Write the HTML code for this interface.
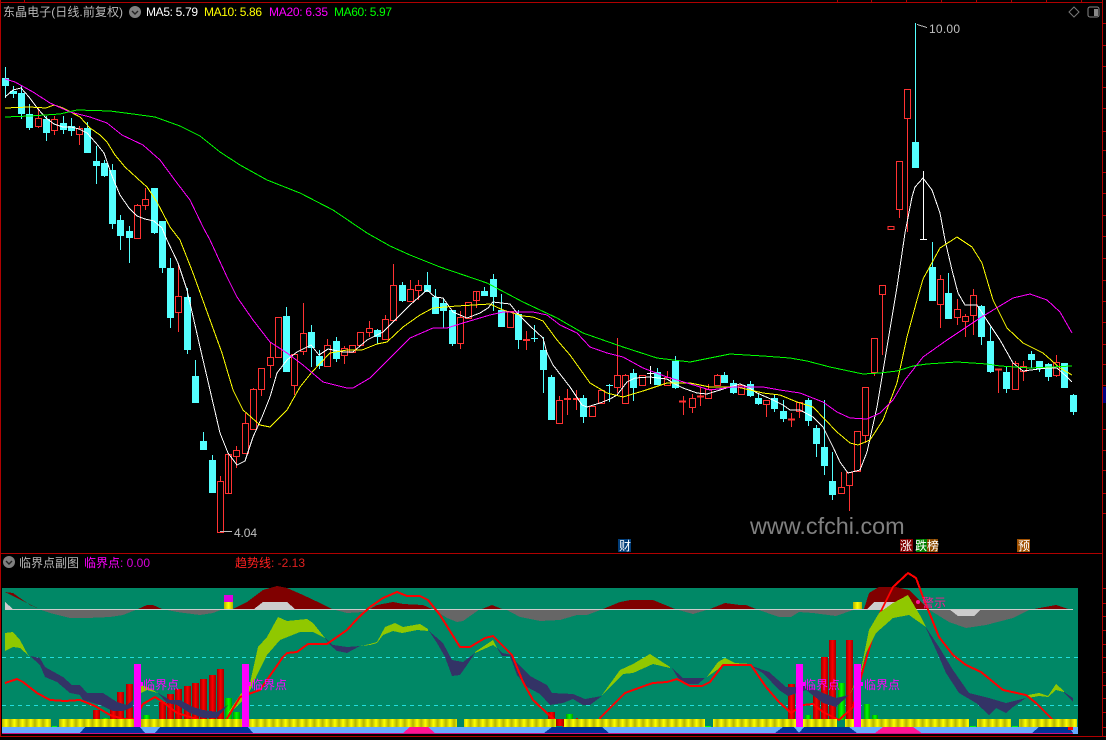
<!DOCTYPE html>
<html><head><meta charset="utf-8"><title>东晶电子</title>
<style>html,body{margin:0;padding:0;background:#000;width:1106px;height:740px;overflow:hidden}svg{display:block}text{font-family:"Liberation Sans","WenQuanYi Zen Hei","Noto Sans CJK SC",sans-serif;font-size:12px}</style></head>
<body>
<svg width="1106" height="740" viewBox="0 0 1106 740" xmlns="http://www.w3.org/2000/svg">
<defs>
<linearGradient id="yg"><stop offset="0" stop-color="#b4b400"/><stop offset=".5" stop-color="#ffff00"/><stop offset="1" stop-color="#b4b400"/></linearGradient>
<pattern id="yb" patternUnits="userSpaceOnUse" x="2" y="719" width="8.22" height="8"><rect width="8.22" height="8" fill="url(#yg)"/></pattern>
<linearGradient id="rg"><stop offset="0" stop-color="#a00000"/><stop offset=".5" stop-color="#ff0000"/><stop offset="1" stop-color="#a00000"/></linearGradient>
<linearGradient id="gg"><stop offset="0" stop-color="#00a000"/><stop offset=".5" stop-color="#00ff00"/><stop offset="1" stop-color="#00a000"/></linearGradient>
</defs>
<g shape-rendering="crispEdges">
<!-- frame -->
<path d="M0 2.5H1103M1102.5 0V737M0 553.5H1103M0 736.5H1106M0.5 0V737M24.5 0V2M837.5 0V2M871.5 0V2M906.5 0V2M941.5 0V2M976.5 0V2M1011.5 0V2M1046.5 0V2M1081.5 0V2" stroke="#b00000" fill="none"/>
<path stroke="#b00000" fill="none" d="M1103 23.5h3M1103 45.5h3M1103 66.5h3M1103 87.5h3M1103 108.5h3M1103 131.5h3M1103 150.5h3M1103 172.5h3M1103 193.5h3M1103 215.5h3M1103 236.5h3M1103 258.5h3M1103 280.5h3M1103 301.5h3M1103 322.5h3M1103 344.5h3M1103 364.5h3M1103 385.5h3M1103 429.5h3M1103 450.5h3M1103 470.5h3M1103 493.5h3M1103 513.5h3M1103 588.5h3M1103 603.5h3M1103 616.5h3M1103 630.5h3M1103 644.5h3M1103 657.5h3M1103 672.5h3M1103 685.5h3M1103 698.5h3M1103 712.5h3M1103 727.5h3"/>
<rect x="1103" y="387" width="3" height="16" fill="#000080"/>

<!-- cyan wicks -->
<path stroke="#54ffff" fill="none" d="M5.5 67V98M13.5 86V98M21.5 86V119M29.5 104V130M46.5 116V141M63.5 116V134M71.5 118V136M87.5 122V153M96.5 146V184M104.5 160V177M112.5 164V229M120.5 215V250M129.5 226V263M154.5 188V234M162.5 221V273M170.5 258V328M187.5 288V354M195.5 360V403M203.5 432V450M212.5 455V493M286.5 307V372M311.5 325V367M319.5 350V369M336.5 337V362M377.5 329V344M402.5 282V302M427.5 272V292M435.5 289V314M443.5 299V328M452.5 310V346M484.5 287V296M493.5 274V311M501.5 294V327M518.5 310V349M534.5 325V342M543.5 337V393M551.5 375V420M583.5 395V423M609.5 384V402M633.5 369V401M657.5 368V385M675.5 356V389M724.5 372V383M733.5 380V394M750.5 381V397M758.5 394V405M774.5 395V412M783.5 400V422M808.5 398V426M816.5 425V457M824.5 400V475M832.5 452V500M915.5 23V142M932.5 242V301M948.5 273V319M981.5 305V345M990.5 327V373M1006.5 367V393M1031.5 351V368M1039.5 361V372M1048.5 363V381M1064.5 363V388M1073.5 394V415"/>
<path stroke="#54ffff" fill="none" d="M531 338.5h7M606 385.5h7"/>
<!-- cyan bodies -->
<path fill="#54ffff" d="M2 78h7V86h-7zM10 91h7V94h-7zM18 93h7V114h-7zM26 114h7V128h-7zM43 119h7V133h-7zM60 123h7V130h-7zM68 126h7V131h-7zM84 128h7V153h-7zM93 161h7V166h-7zM101 163h7V176h-7zM109 170h7V224h-7zM117 220h7V236h-7zM126 231h7V238h-7zM151 188h7V233h-7zM159 221h7V268h-7zM167 268h7V318h-7zM184 297h7V350h-7zM192 376h7V403h-7zM200 441h7V450h-7zM209 460h7V493h-7zM283 316h7V372h-7zM308 332h7V348h-7zM316 356h7V366h-7zM333 341h7V359h-7zM374 330h7V337h-7zM399 285h7V301h-7zM424 285h7V292h-7zM432 297h7V314h-7zM440 303h7V311h-7zM449 310h7V344h-7zM481 291h7V296h-7zM490 279h7V297h-7zM498 310h7V327h-7zM515 314h7V340h-7zM540 350h7V370h-7zM548 377h7V420h-7zM580 398h7V417h-7zM630 373h7V388h-7zM654 372h7V385h-7zM672 361h7V388h-7zM721 375h7V383h-7zM730 383h7V393h-7zM747 384h7V396h-7zM755 398h7V404h-7zM771 398h7V409h-7zM780 411h7V419h-7zM805 400h7V421h-7zM813 428h7V444h-7zM821 447h7V466h-7zM829 481h7V495h-7zM912 142h7V168h-7zM929 267h7V301h-7zM945 293h7V319h-7zM978 306h7V337h-7zM987 341h7V372h-7zM1003 372h7V389h-7zM1028 354h7V360h-7zM1036 361h7V369h-7zM1045 364h7V377h-7zM1061 363h7V388h-7zM1070 395h7V412h-7z"/>
<!-- red wicks -->
<path stroke="#ff3232" fill="none" d="M38.5 108V118M38.5 126V128M54.5 116V119M54.5 130V135M79.5 126V128M79.5 134V145M137.5 204V205M145.5 188V199M145.5 205V210M178.5 265V296M178.5 312V332M220.5 476V481M228.5 454V493M236.5 446V450M236.5 456V468M245.5 413V423M253.5 388V389M261.5 389V396M270.5 342V357M270.5 365V378M294.5 385V395M303.5 303V333M303.5 351V355M327.5 339V345M344.5 346V348M344.5 355V364M369.5 321V328M369.5 332V337M385.5 315V319M393.5 264V285M410.5 280V289M418.5 280V285M418.5 290V300M460.5 311V317M460.5 343V349M476.5 292V300M476.5 300V308M526.5 331V350M559.5 396V400M559.5 423V424M567.5 389V415M576.5 390V410M592.5 416V417M617.5 338V375M617.5 387V393M625.5 374V375M625.5 403V404M667.5 371V377M683.5 396V415M692.5 394V398M692.5 407V413M700.5 387V406M708.5 384V389M717.5 374V375M766.5 404V417M791.5 413V427M799.5 402V418M841.5 472V487M849.5 485V511M857.5 431V432M865.5 435V443M874.5 372V376M882.5 294V355M899.5 209V218M907.5 118V232M940.5 275V279M940.5 304V328M957.5 299V309M957.5 317V325M965.5 314V316M965.5 321V337M973.5 289V295M973.5 315V335M998.5 369V393M1015.5 361V363M1023.5 361V366M1023.5 371V381M1056.5 355V362M1056.5 375V377"/>
<!-- red flat -->
<path stroke="#ff3232" stroke-width="2" fill="none" d="M523 340h7M564 399h7M573 399h7M679 401.500h7M697 396.500h7M788 419.500h7M995 369.500h7"/>
<!-- red hollow bodies -->
<path stroke="#ff3232" fill="none" d="M35.500 118.500h6v8h-6zM51.500 119.500h6v11h-6zM76.500 128.500h6v6h-6zM134.500 205.500h6v33h-6zM142.500 199.500h6v6h-6zM175.500 296.500h6v16h-6zM217.500 481.500h6v51h-6zM225.500 454.500h6v39h-6zM233.500 450.500h6v6h-6zM242.500 423.500h6v30h-6zM250.500 389.500h6v40h-6zM258.500 368.500h6v21h-6zM267.500 357.500h6v8h-6zM275.500 317.500h6v40h-6zM291.500 354.500h6v31h-6zM300.500 333.500h6v18h-6zM324.500 345.500h6v21h-6zM341.500 348.500h6v7h-6zM349.500 345.500h6v7h-6zM357.500 332.500h6v13h-6zM366.500 328.500h6v4h-6zM382.500 319.500h6v20h-6zM390.500 285.500h6v35h-6zM407.500 289.500h6v12h-6zM415.500 285.500h6v5h-6zM457.500 317.500h6v26h-6zM465.500 302.500h6v16h-6zM473.500 291.500h6v9h-6zM507.500 311.500h6v16h-6zM556.500 400.500h6v23h-6zM589.500 406.500h6v10h-6zM598.500 390.500h6v13h-6zM614.500 375.500h6v12h-6zM622.500 375.500h6v28h-6zM639.500 375.500h6v10h-6zM664.500 377.500h6v8h-6zM689.500 398.500h6v9h-6zM705.500 389.500h6v9h-6zM714.500 375.500h6v10h-6zM738.500 385.500h6v9h-6zM763.500 400.500h6v4h-6zM796.500 402.500h6v9h-6zM838.500 487.500h6v6h-6zM846.500 472.500h6v13h-6zM854.500 431.500h6v40h-6zM862.500 387.500h6v48h-6zM871.500 338.500h6v34h-6zM879.500 285.500h6v9h-6zM888 226.500h6v3h-6zM896.500 161.500h6v48h-6zM904.500 89.500h6v29h-6zM937.500 279.500h6v25h-6zM954.500 309.500h6v8h-6zM962.500 316.500h6v5h-6zM970.500 295.500h6v20h-6zM1012.500 363.500h6v26h-6zM1020.500 366.500h6v5h-6zM1053.500 362.500h6v13h-6z"/>
<!-- white doji / cross -->
<path stroke="#fff" fill="none" d="M650.500 366V384M647 373.500h7M923.500 171V239M920 239.500h7"/>

<!-- MA lines -->
<polyline fill="none" stroke="#fff" points="5,97 13,90 21,88 29,97 38,109 46,118 54,124 63,127 71,127 79,129 87,133 96,143 104,153 112,176 120,195 129,208 137,216 145,219 154,221 162,228 167,240 178,263 187,290 200,347 210,390 220,433 228,453 237,465 245,461 253,437 262,417 270,397 277,373 287,360 297,352 311,345 319,355 328,349 343,352 353,352 367,340 383,332 390,325 400,315 410,305 427,290 435,297 443,298 453,312 467,318 480,313 488,308 493,302 510,304 517,313 530,326 543,338 547,353 553,365 570,387 582,405 587,407 600,403 610,399 617,395 627,382 635,378 650,377 667,379 673,383 683,388 697,393 707,394 720,390 740,384 748,387 757,393 773,400 783,405 790,410 800,410 813,417 823,427 833,447 840,462 848,473 860,470 867,452 877,407 887,347 897,287 905,233 912,197 915,187 923,178 932,190 940,213 945,240 952,270 958,293 965,305 977,305 988,322 1000,340 1013,363 1023,371 1047,368 1057,368 1067,377 1072,382"/>
<polyline fill="none" stroke="#ff0" points="5,108 29,107 46,108 54,105 63,108 80,117 90,128 100,135 107,142 115,155 125,167 137,178 147,187 157,202 170,227 180,240 193,273 210,320 222,353 233,390 243,410 260,425 270,427 287,410 300,387 312,372 330,353 347,350 362,350 377,344 387,342 403,327 420,315 433,308 457,306 490,304 503,310 523,316 533,317 543,321 557,340 570,355 590,383 607,393 623,397 643,391 667,383 690,383 710,387 737,387 763,393 780,395 797,402 813,407 837,432 850,443 858,445 870,440 883,420 897,383 907,337 917,300 923,279 940,248 957,237 972,247 982,263 993,300 1007,328 1023,343 1043,353 1060,368 1072,375"/>
<polyline fill="none" stroke="#ff00ff" points="5,79 15,82 33,92 50,103 70,112 90,117 107,123 122,135 143,145 160,160 177,183 190,200 203,227 210,240 227,277 237,297 253,320 270,342 287,353 303,365 323,382 347,388 353,388 370,378 390,358 410,338 433,328 447,328 463,323 490,315 503,312 533,312 547,315 560,325 577,333 590,347 607,353 623,357 643,368 667,377 687,383 710,390 733,387 763,387 780,390 800,393 823,402 837,412 850,418 867,419 880,413 893,400 905,380 923,357 947,340 980,318 1013,298 1030,294 1047,300 1060,312 1072,333"/>
<polyline fill="none" stroke="#00ff00" points="5,117 30,116 60,114 77,110 110,111 133,114 155,117 180,126 200,136 220,152 240,165 267,180 300,193 333,210 367,233 390,246 410,255 440,267 487,283 523,302 557,318 583,333 623,347 657,358 690,362 730,354 763,356 790,358 807,361 830,367 863,374 880,373 897,371 913,366 927,364 957,362 987,364 1000,366 1030,368 1072,366"/>

<!-- sub-chart background -->
<rect x="2" y="588" width="1076" height="146" fill="#008866"/>
<!-- dark-red hills -->
<path fill="#800000" d="M5 592L13 593 20 598 30 605 39 609ZM138 609L147 605 153 605 162 609ZM233 609L247 602 263 590 277 586 287 588 303 595 320 603 332 609ZM370 609L377 605 393 602 403 604 423 605 432 609ZM482 609L492 605 502 609ZM603 609L620 602 630 600 653 600 675 609ZM710 609L725 603 740 605 746 605 756 609ZM864 609L869 593 879 587 896 587 909 590 921 602 928 609ZM1034 609L1056 605 1068 609Z"/>
<path fill="#666" d="M38 609L50 613 70 618 87 618 110 617 123 615 138 609ZM162 609L177 612 200 615 213 613 223 609ZM332 609L347 613 363 612 370 609ZM433 609L447 618 457 622 463 621 480 609ZM505 609L520 617 540 621 560 620 577 615 587 615 603 609ZM675 609L693 614 710 609ZM756 609L779 617 791 617 799 612 813 613 836 616 853 610ZM928 609L949 622 966 628 986 625 1013 618 1031 609Z"/>
<path fill="#ccc" d="M5 602L13 609H5ZM254 609L263 602 287 602 295 609ZM867 609L874 602 896 602 900 609ZM949 609L958 616 974 616 981 609Z"/>
<rect x="5" y="609" width="1068" height="1" fill="#ccc"/>
<!-- dashed -->
<path stroke="#22dddd" stroke-dasharray="4 4" fill="none" d="M2 657.500H1078M2 705.500H1078"/>
<!-- red bars -->
<g fill="url(#rg)">
<rect x="93" y="710" width="7" height="10"/><rect x="110" y="708" width="7" height="12"/><rect x="117" y="692" width="7" height="28"/><rect x="126" y="684" width="7" height="36"/><rect x="159" y="702" width="7" height="18"/><rect x="167" y="694" width="7" height="26"/><rect x="175" y="689" width="7" height="31"/><rect x="184" y="686" width="7" height="34"/><rect x="192" y="683" width="7" height="37"/><rect x="200" y="679" width="7" height="41"/><rect x="209" y="675" width="7" height="45"/><rect x="217" y="669" width="7" height="51"/><rect x="548" y="712" width="7" height="8"/><rect x="576" y="718" width="2" height="2"/><rect x="788" y="684" width="7" height="36"/><rect x="813" y="693" width="7" height="27"/><rect x="821" y="657" width="7" height="63"/><rect x="829" y="640" width="7" height="80"/><rect x="846" y="640" width="7" height="80"/>
</g>
<g fill="url(#gg)">
<rect x="102" y="718" width="7" height="2"/><rect x="143" y="715" width="7" height="5"/><rect x="225" y="698" width="7" height="22"/><rect x="233" y="712" width="7" height="8"/><rect x="566" y="714" width="7" height="6"/><rect x="805" y="715" width="6" height="5"/><rect x="838" y="683" width="7" height="37"/><rect x="864" y="704" width="6" height="16"/><rect x="872" y="715" width="6" height="5"/>
</g>
<!-- ribbons -->
<path fill="#90c800" d="M5 633L13 632 20 640 28 655 29 656 20 648 13 647 5 651ZM141 685L147 687 158 693 147 690 141 693ZM228 713L240 695 250 683 258 647 267 637 278 617 287 621 307 619 313 623 325 638 313 632 300 632 280 640 267 655 257 675 248 695 233 710ZM360 646L370 644 377 642 385 627 395 623 403 627 420 624 428 629 428 631 417 630 402 633 393 631 383 635 377 643 370 645ZM475 652L493 640 497 648 493 645 475 653ZM602 695L620 670 633 664 650 654 670 667 670 668 653 664 633 673 623 674ZM707 677L718 662 725 658 735 663 751 664 751 665 736 666 723 665 717 670Z"/>
<path fill="#90c800" d="M1028 695L1039 693 1048 696 1056 684 1064 691 1064 692 1056 690 1048 697 1039 696 1028 698Z"/>
<path fill="#333366" d="M30 656L40 658 45 667 63 677 72 685 80 685 87 693 103 693 117 702 127 705 133 700 133 707 123 711 113 711 100 705 83 700 80 695 70 693 57 682 45 677 40 665ZM158 693L170 700 180 700 193 707 203 710 217 712 228 705 217 718 203 718 190 713 177 705 167 703ZM325 638L333 645 347 647 360 646 347 653 337 651 330 645ZM429 631L443 643 452 660 463 662 475 653 467 665 460 675 452 676 445 657 437 643ZM497 648L502 653 512 655 517 663 530 676 547 685 552 693 573 694 585 699 602 696 590 705 583 705 573 699 563 703 550 705 540 694 527 687 517 675 510 656 502 656ZM672 668L683 678 705 678 698 684 687 684 678 678ZM752 666L769 672 786 687 796 687 806 685 823 693 836 698 849 695 836 707 823 703 806 690 788 696 779 690 764 674 753 667ZM925 626L939 647 953 670 969 693 989 698 1006 703 1026 698 1013 707 1006 713 996 708 989 715 976 703 959 693 946 673 936 650ZM1064 692L1073 698 1073 702 1064 693Z"/>
<!-- trend line -->
<polyline fill="none" stroke="#ff0000" stroke-width="2" points="5,683 17,679 23,682 37,693 50,700 65,701 80,700 95,706 110,715 123,719 135,719 143,704 155,697 163,702 177,713 190,717 207,722 217,727 225,722 240,697 260,690 283,657 287,653 297,652 308,644 327,644 347,630 358,618 370,607 383,598 397,592 407,596 420,596 428,600 440,615 460,647 470,647 485,638 493,636 512,655 523,682 533,700 550,716 560,723 565,727 600,727 600,718 625,693 647,685 653,683 667,682 677,679 690,686 702,686 710,682 723,665 736,665 751,665 766,687 779,702 791,713 803,705 813,704 823,712 839,720 853,707 863,670 879,615 893,587 908,573 916,578 923,597 939,637 953,655 966,665 981,672 1003,690 1026,695 1036,703 1053,720 1073,730"/>
<!-- big ribbon above trend -->
<path fill="#90c800" d="M849 696L861 670 869 630 879 613 893 603 908 595 921 617 926 627 909 615 893 618 876 633 866 653 861 673Z"/>
<!-- pink bars -->
<g fill="#ff00ff"><rect x="134" y="664" width="7" height="63"/><rect x="242" y="664" width="7" height="63"/><rect x="796" y="664" width="7" height="63"/><rect x="854" y="664" width="7" height="63"/></g>
<!-- marker columns -->
<rect x="224" y="595" width="9" height="7" fill="#e000e0"/><rect x="224" y="602" width="9" height="7" fill="url(#yg)"/><rect x="853" y="602" width="9" height="7" fill="url(#yg)"/>
<!-- bottom band -->
<rect x="2" y="727" width="1076" height="7" fill="#66aaff"/>
<path fill="#003399" d="M80 733L85 727H140L145 733ZM155 733L160 727H248L253 733ZM544 733L552 727H602L609 733ZM775 733L783 727H794L799 733ZM799 733L804 727H849L857 733ZM1032 733L1039 727H1069L1073 733Z"/>
<path fill="#ff1493" d="M403 733L410 727H428L435 733ZM875 733L883 727H913L923 734Z"/>
<rect x="1068" y="727" width="5" height="3" fill="#ff0000"/>
<rect x="2" y="733" width="1071" height="1" fill="#cc1080"/>
<path fill="url(#yb)" d="M2 719H51V727H2ZM59 719H457V727H59ZM464 719H556V727H464ZM564 719H705V727H564ZM713 719H796V727H713ZM803 719H837V727H803ZM845 719H854V727H845ZM861 719H969V727H861ZM977 719H1011V727H977ZM1019 719H1077V727H1019Z"/>
<rect x="556" y="719" width="8" height="7" fill="url(#rg)"/>
<rect x="134" y="719" width="7" height="8" fill="#ff00ff"/><rect x="242" y="719" width="7" height="8" fill="#ff00ff"/><rect x="796" y="719" width="7" height="8" fill="#ff00ff"/><rect x="854" y="719" width="7" height="8" fill="#ff00ff"/>
<rect x="52" y="726" width="5" height="1" fill="#00ff00"/><rect x="705" y="726" width="6" height="1" fill="#00ff00"/><rect x="970" y="726" width="6" height="1" fill="#00ff00"/><rect x="1012" y="726" width="6" height="1" fill="#00ff00"/>
<!-- price arrows -->
<path fill="none" stroke="#c0c0c0" d="M917 24.500L927 27.500M220 531.500H232"/>
<!-- label pointers -->
<path fill="#ff00ff" d="M141 682h2v4h-2zM249 682h2v4h-2zM803 682h2v4h-2zM861 682h2v4h-2z"/>
</g>

<!-- top texts -->
<text x="3" y="16" fill="#b8b8b8" textLength="120">东晶电子(日线.前复权)</text>
<circle cx="135" cy="12" r="6" fill="#808080"/><path d="M132 11l3 3 3-3" fill="none" stroke="#222" stroke-width="1.400"/>
<text x="146" y="16" fill="#fff" textLength="52">MA5: 5.79</text>
<text x="204" y="16" fill="#ff0" textLength="58">MA10: 5.86</text>
<text x="269" y="16" fill="#ff00ff" textLength="59">MA20: 6.35</text>
<text x="334" y="16" fill="#00ff00" textLength="58">MA60: 5.97</text>
<path d="M1074 7l5 5-5 5-5-5z" fill="none" stroke="#777"/>
<rect x="1088" y="7" width="11" height="10" rx="2" fill="none" stroke="#888"/><rect x="1094" y="9" width="4" height="7" fill="#888"/>
<text x="929" y="33" fill="#c0c0c0" textLength="31">10.00</text>
<text x="234" y="537" fill="#c0c0c0" textLength="23">4.04</text>
<text x="750" y="534" style="font-size:23.4px" fill="#808080">www.cfchi.com</text>

<!-- tags -->
<rect x="618" y="539" width="13" height="13" fill="#003c78"/><text x="619" y="550" fill="#fff">财</text>
<rect x="900" y="539" width="13" height="13" fill="#800000"/><text x="900" y="550" fill="#fff">涨</text>
<rect x="916" y="539" width="11" height="13" fill="#008000"/><rect x="927" y="539" width="11" height="13" fill="#8b4a00"/><text x="915" y="550" fill="#fff">跌榜</text>
<rect x="1017" y="539" width="13" height="13" fill="#a05000"/><text x="1018" y="550" fill="#fff">预</text>

<!-- sub header -->
<circle cx="9" cy="562" r="6" fill="#808080"/><path d="M6 561l3 3 3-3" fill="none" stroke="#222" stroke-width="1.400"/>
<text x="19" y="567" fill="#b8b8b8">临界点副图</text>
<text x="84" y="567" fill="#ff00ff">临界点</text><text x="120" y="567" fill="#d800d8" textLength="30">: 0.00</text>
<text x="235" y="567" fill="#ff2020">趋势线</text><text x="271" y="567" fill="#e02020" textLength="34">: -2.13</text>

<!-- sub labels -->
<text x="143" y="689" fill="#ff00ff">临界点</text>
<text x="251" y="689" fill="#ff00ff">临界点</text>
<text x="804" y="689" fill="#ff00ff">临界点</text>
<text x="864" y="689" fill="#ff00ff">临界点</text>
<circle cx="918" cy="602" r="2" fill="#ff1493"/>
<text x="922" y="607" fill="#ff1493">警示</text>
</svg>
</body></html>
